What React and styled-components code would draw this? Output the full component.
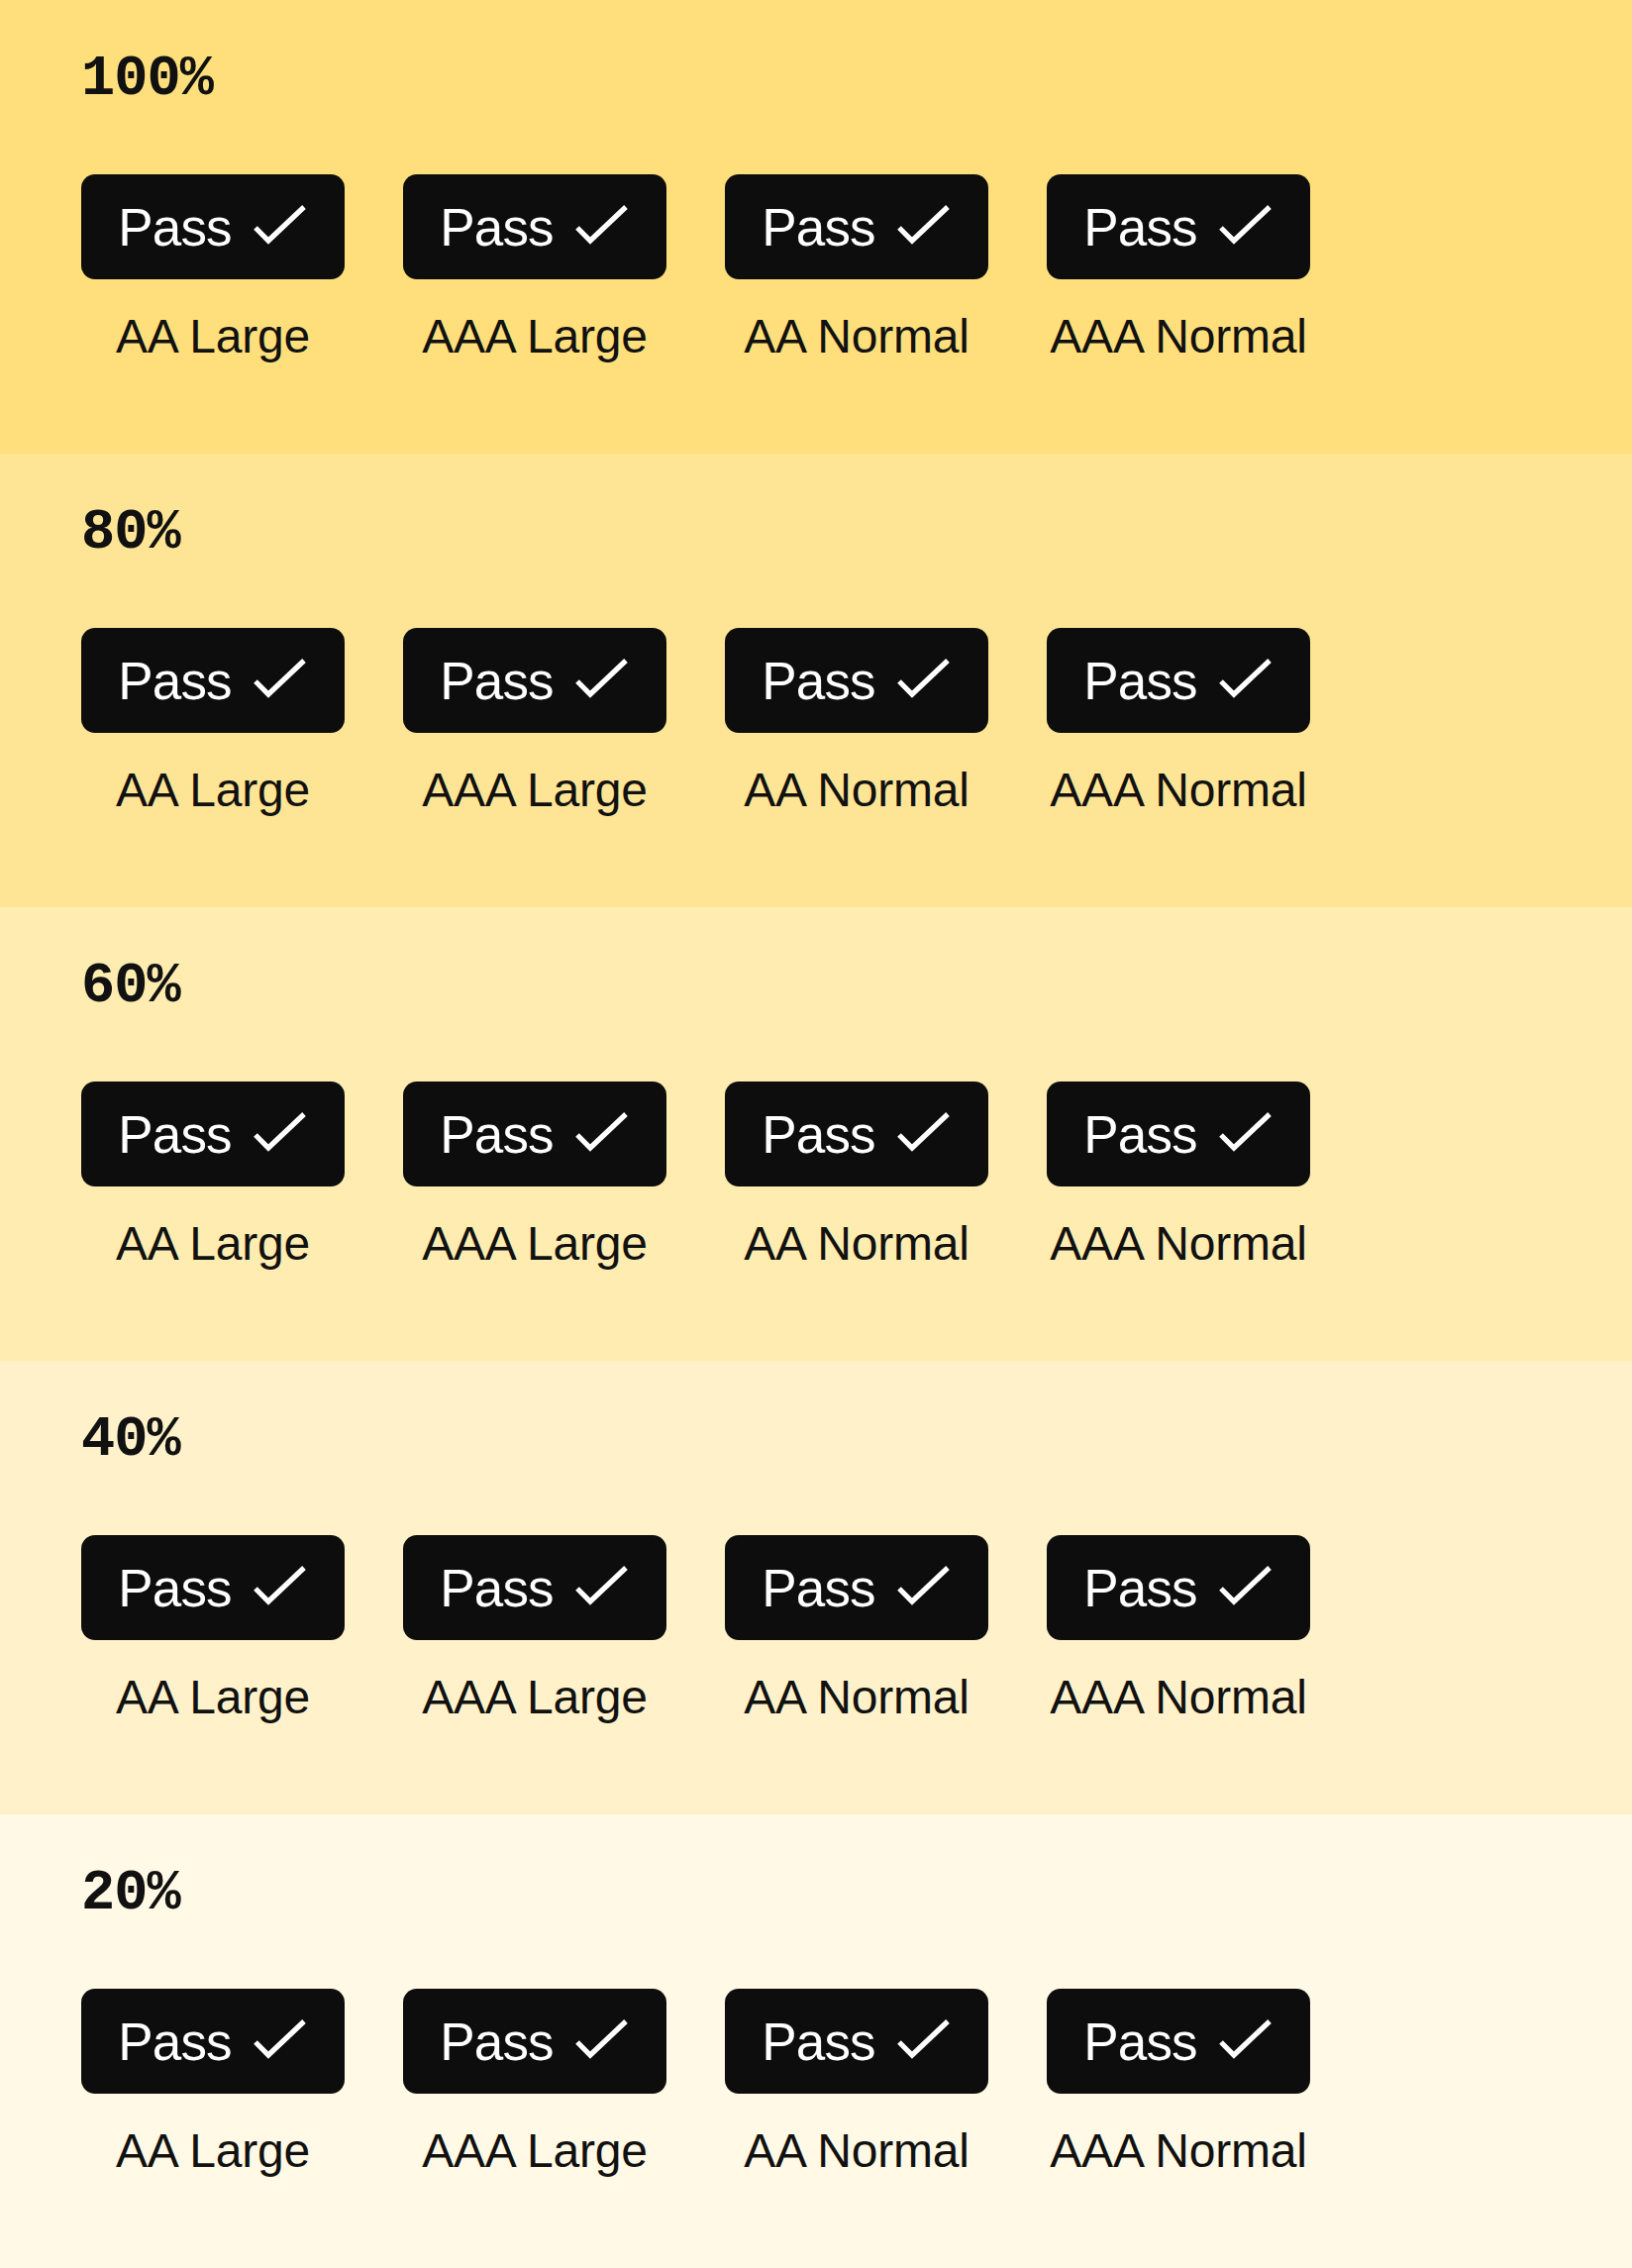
import styled, { createGlobalStyle } from "styled-components";

// Contrast sheet: one band per tint of the base yellow
const GlobalStyle = createGlobalStyle`
  html, body {
    margin: 0;
    padding: 0;
    background: #fef7e4;
  }
`;

const BASE = [254, 223, 123];

const tint = (pct) => {
  const p = pct / 100;
  const mix = BASE.map((c) => Math.round(255 - p * (255 - c)));
  return `rgb(${mix.join(",")})`;
};

const levels = [100, 80, 60, 40, 20];
const checks = ["AA Large", "AAA Large", "AA Normal", "AAA Normal"];

const Page = styled.main`
  display: flex;
  flex-direction: column;
  width: 1648px;
`;

const Band = styled.section`
  height: 458px;
  box-sizing: border-box;
  padding: 52px 82px 0;
  background: ${(p) => p.$bg};
  display: flex;
  flex-direction: column;
`;

const Heading = styled.h2`
  margin: 0;
  font-family: "Liberation Mono", "DejaVu Sans Mono", monospace;
  font-weight: 700;
  font-size: 57px;
  line-height: 1;
  letter-spacing: -1px;
  color: #111;
`;

const Row = styled.div`
  display: flex;
  gap: 59px;
  margin-top: 67px;
`;

const Item = styled.div`
  display: flex;
  flex-direction: column;
  align-items: center;
  gap: 34px;
  width: 266px;
`;

const Badge = styled.div`
  width: 266px;
  height: 106px;
  box-sizing: border-box;
  border-radius: 14px;
  background: #0d0d0d;
  color: #fff;
  display: flex;
  align-items: center;
  justify-content: center;
  gap: 21px;
  font-family: "Liberation Sans", Arial, sans-serif;
  font-size: 53px;
  letter-spacing: -0.8px;
  line-height: 1;
`;

const Label = styled.div`
  font-family: "Liberation Sans", Arial, sans-serif;
  font-size: 48px;
  letter-spacing: -0.2px;
  line-height: 1;
  color: #111;
  white-space: nowrap;
`;

const Check = () => (
  <svg width="56" height="44" viewBox="0 0 56 44" fill="none">
    <path
      d="M3 23 L16 36 L52 2"
      stroke="#fff"
      strokeWidth="5.2"
      strokeLinejoin="miter"
    />
  </svg>
);

export default function App() {
  return (
    <>
      <GlobalStyle />
      <Page>
        {levels.map((lvl) => (
          <Band key={lvl} $bg={tint(lvl)}>
            <Heading>{lvl}%</Heading>
            <Row>
              {checks.map((c) => (
                <Item key={c}>
                  <Badge>
                    <span>Pass</span>
                    <Check />
                  </Badge>
                  <Label>{c}</Label>
                </Item>
              ))}
            </Row>
          </Band>
        ))}
      </Page>
    </>
  );
}
